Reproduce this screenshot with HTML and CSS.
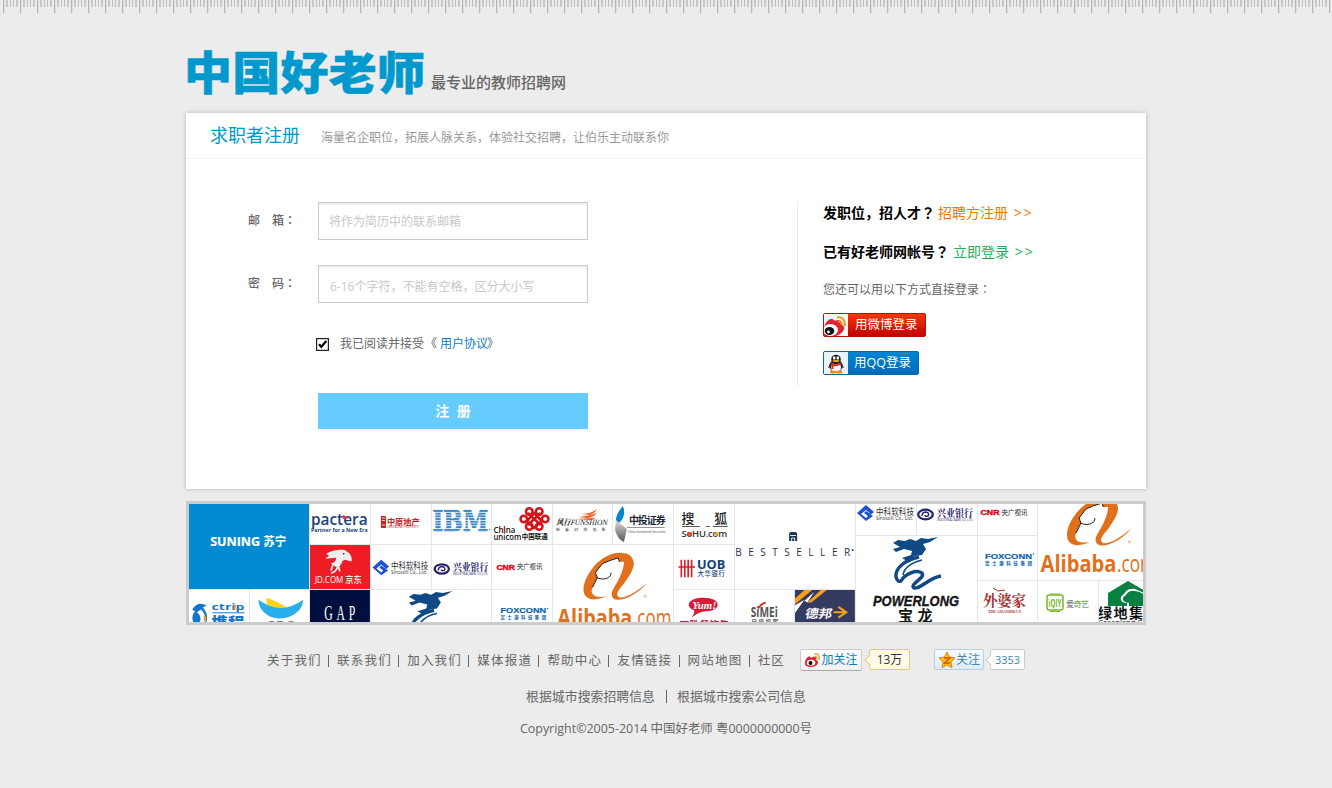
FILE: index.html
```html
<!DOCTYPE html>
<html lang="zh-CN">
<head>
<meta charset="utf-8">
<title>中国好老师 - 求职者注册</title>
<link rel="stylesheet" href="styles.css">
</head>
<body>
<div class="ruler"></div>
<div class="page">
  <header class="header">
    <svg class="logo" width="238" height="54" viewBox="0 0 238 54"><text x="-2" y="46" transform="scale(1 .94)" textLength="241" lengthAdjust="spacing">中国好老师</text></svg>
    <span class="slogan">最专业的教师招聘网</span>
  </header>

  <main class="card">
    <div class="card-head">
      <h1>求职者注册</h1>
      <p>海量名企职位，拓展人脉关系，体验社交招聘，让伯乐主动联系你</p>
    </div>
    <div class="card-body">
      <form class="form">
        <div class="field"><label for="mail">邮　箱<span class="mark">：</span></label><input id="mail" type="text" placeholder="将作为简历中的联系邮箱"></div>
        <div class="field"><label for="pwd">密　码<span class="mark">：</span></label><input id="pwd" class="pwd" type="text" placeholder="6-16个字符，不能有空格，区分大小写"></div>
        <div class="agree">
          <svg width="13" height="13" viewBox="0 0 13 13"><rect x=".6" y=".6" width="11.8" height="11.8" fill="#fff" stroke="#222" stroke-width="1.2"/><path d="M3 6.2L5.3 8.8L10.3 3" fill="none" stroke="#000" stroke-width="2.2"/></svg>
          <span>我已阅读并接受<i>《</i><a>用户协议</a><i class="close">》</i></span>
        </div>
        <button class="submit" type="button">注&nbsp; 册</button>
      </form>
      <aside class="side">
        <p class="line"><b>发职位，招人才<span class="mark">？</span></b><a class="orange">招聘方注册 <span class="more">&gt;&gt;</span></a></p>
        <p class="line second"><b>已有好老师网帐号<span class="mark">？</span></b><a class="green">立即登录 <span class="more">&gt;&gt;</span></a></p>
        <p class="hint">您还可以用以下方式直接登录<span class="mark">：</span></p>
        <a class="login weibo">
          <svg width="24" height="22" viewBox="0 0 24 22"><path d="M0 13C3 5 8 3 11 7C16 4 19 8 18 11C23 13 19 20 12 22H0Z" fill="#df2430"/><ellipse cx="6.500" cy="16" rx="7.500" ry="6" fill="#fff"/><ellipse cx="5.500" cy="17" rx="4.800" ry="4" fill="#111"/><circle cx="4.500" cy="18" r="1.400" fill="#fff"/><path d="M13 3.500Q21 2 21 12M14 7.500Q18 7 17.500 11" fill="none" stroke="#f29a1f" stroke-width="2"/></svg>
          <span>用微博登录</span>
        </a>
        <a class="login qq">
          <svg width="24" height="22" viewBox="0 0 24 22"><path d="M7 10L4 16L7 15Z M17 10L20 16L17 15Z" fill="#222"/><ellipse cx="12" cy="14" rx="6.500" ry="6.500" fill="#222"/><ellipse cx="12" cy="15.500" rx="5" ry="5" fill="#fff"/><ellipse cx="12" cy="7.500" rx="4.800" ry="4.800" fill="#222"/><ellipse cx="10.200" cy="6" rx="1.300" ry="1.800" fill="#fff"/><ellipse cx="13.800" cy="6" rx="1.300" ry="1.800" fill="#fff"/><ellipse cx="12" cy="9" rx="3.400" ry="1" fill="#f5a623"/><path d="M6.500 10.500Q12 14 17.500 10.500V12.500Q12 15 9.500 14V17H7.500V13Z" fill="#e02a1f"/><ellipse cx="9" cy="20" rx="3.200" ry="1.500" fill="#f08a1c"/><ellipse cx="15" cy="20" rx="3.200" ry="1.500" fill="#f08a1c"/></svg>
          <span>用QQ登录</span>
        </a>
      </aside>
    </div>
  </main>

  <svg class="defs" width="0" height="0">
    <defs>
      <pattern id="stripes" width="60" height="2.700" patternUnits="userSpaceOnUse" y="510"><rect width="60" height="1.900" fill="#3a87c8"/></pattern>
      <linearGradient id="silver" x2="0" y2="1"><stop stop-color="#ddd"/><stop offset="1" stop-color="#555"/></linearGradient>
      <g id="sinosoft">
        <path d="M372 567L381 559L389 566L386 568.500L381 564L376 568L381 572L383 570L379 567L381 565L388 570L381 575Z" fill="#1e50d8"/>
        <text x="391" y="568.500" font-size="9" textLength="38" lengthAdjust="spacingAndGlyphs" fill="#333">中科软科技</text>
        <text x="391" y="573.500" font-size="5" textLength="37" lengthAdjust="spacingAndGlyphs" fill="#333">Sinosoft Co., Ltd.</text>
      </g>
      <g id="cib">
        <ellipse cx="440.500" cy="568.500" rx="7.300" ry="4.800" fill="none" stroke="#27246b" stroke-width="2.300"/>
        <path d="M437 570Q437 566 441 566Q445 567 443 570Q440 571 440 569" fill="none" stroke="#27246b" stroke-width="1.500"/>
        <text class="serif" x="452" y="571" font-size="10.500" font-weight="700" textLength="36" lengthAdjust="spacingAndGlyphs" fill="#27246b">兴业银行</text>
        <text x="452" y="574.500" font-size="3.600" textLength="36" lengthAdjust="spacingAndGlyphs" fill="#27246b">INDUSTRIAL BANK CO.,LTD.</text>
      </g>
      <g id="cnr">
        <text class="arial" x="496" y="569.300" font-size="7.500" font-weight="700" textLength="19" lengthAdjust="spacingAndGlyphs" fill="#e2001a" stroke="#e2001a" stroke-width=".4">CNR</text>
        <text x="517" y="569" font-size="6.500" textLength="26" lengthAdjust="spacingAndGlyphs" fill="#222">央广视讯</text>
      </g>
      <g id="foxconn">
        <text class="arial" x="500" y="612.500" font-size="8" font-weight="700" textLength="47" lengthAdjust="spacingAndGlyphs" fill="#0a62b0" stroke="#0a62b0" stroke-width=".2">FOXCONN</text><circle cx="548.500" cy="608" r=".7" fill="#0a62b0"/>
        <text x="500" y="618.500" font-size="4.500" font-weight="700" textLength="47" fill="#0a62b0">富士康科技集团</text>
      </g>
      <g id="alibaba">
        <path d="M622 552C610 551 598 559 591 569C585 577 581 587 584 594C588 602 599 599 606 596C596 598 589 595 592 587L597 577L595 572L602 563L609 560L618 557.500L619 561L624 561C624 569 619 579 614 587C610 593 611 599 617 599.500C626 600 640 592 647 582.500C640 589 626 599 619 597C614 594 620 588 624 583C631 573 634 568 634 562C633 555 628 552 622 552Z" fill="#e2701b"/>
        <path d="M592 587L597 577L595 572L602 563L609 560L618 557L619.500 561M596 577Q604 580 608 577Q611 576 611 572" fill="none" stroke="#222" stroke-width="1"/>
        <circle cx="645.500" cy="596" r="1" fill="none" stroke="#e2701b" stroke-width=".5"/>
        <text x="556.500" y="626" font-size="24" font-weight="700" textLength="76" lengthAdjust="spacingAndGlyphs" fill="#e2701b">Alibaba</text>
        <text x="633" y="626" font-size="24" textLength="39" lengthAdjust="spacingAndGlyphs" fill="#e2701b">.com</text>
      </g>
      <g id="powerlong">
        <path d="M408 596L413 593L420 594L425 592L431 594L436 591L443 592L453 590L445 595L438 597L441 602L437 608L430 609L422 614L417 611L426 608L427 604L419 602L411 605L408 602L415 600Z" fill="#104a86"/>
        <path d="M434 610C420 613 410 621 411 630C412 634 414 635 416 634C420 627 431 622 437 626C441 631 424 637 429 641C435 643 443 631 456 629" fill="none" stroke="#104a86" stroke-width="3.400"/>
        <path d="M437 613C425 616 419 622 418 628" fill="none" stroke="#104a86" stroke-width="1.600"/>
      </g>
    </defs>
  </svg>

  <section class="wall">
    <div class="tiles left">
      <svg class="big" viewBox="189 504 120 85"><rect x="188" y="504" width="122" height="86" fill="#008ad2"/><text x="210" y="545.500" font-size="13" font-weight="700" textLength="50" lengthAdjust="spacingAndGlyphs" fill="#fff" stroke="#fff" stroke-width=".2">SUNING</text><text x="263" y="545.500" font-size="12" font-weight="700" textLength="23" lengthAdjust="spacingAndGlyphs" fill="#fff">苏宁</text></svg>
      <svg viewBox="310 504 60 40"><text x="311" y="525.500" font-size="16" font-weight="600" textLength="57" lengthAdjust="spacingAndGlyphs" fill="#1b4379">pactera</text><path d="M343 515L350 518L343 519Z" fill="#e0304a"/><text x="311" y="532.500" font-size="5.500" font-weight="700" textLength="57" lengthAdjust="spacingAndGlyphs" fill="#1b4379">Partner for a New Era</text></svg>
      <svg viewBox="371 504 60 40"><rect x="381" y="516" width="5" height="12" fill="#c5221f"/><path d="M382 518h3M382 520.500h3M382 525h3" stroke="#fff" stroke-width=".8"/><text x="387" y="525" font-size="8.500" font-weight="700" textLength="33" lengthAdjust="spacingAndGlyphs" fill="#c5221f">中原地产</text><text x="387" y="528.300" font-size="3.300" textLength="32" lengthAdjust="spacingAndGlyphs" fill="#c5221f">CENTALINE PROPERTY</text></svg>
      <svg viewBox="431 504 60 40"><text class="slab" x="431.500" y="531" font-size="28" font-weight="700" textLength="56" lengthAdjust="spacingAndGlyphs" fill="url(#stripes)" stroke="url(#stripes)" stroke-width=".8">IBM</text><circle cx="489" cy="529.500" r=".8" fill="#3a87c8"/></svg>
      <svg viewBox="492 504 60 40"><g fill="none" stroke="#d7141a" stroke-width="2.600"><circle cx="529.500" cy="511.500" r="3.300"/><circle cx="539.500" cy="511.500" r="3.300"/><circle cx="524" cy="519" r="3.300"/><circle cx="545.500" cy="519" r="3.300"/><circle cx="529.500" cy="526.500" r="3.300"/><circle cx="539.500" cy="526.500" r="3.300"/><path d="M527 521L534.500 513L542 521L534.500 528ZM528 513L541 525M541 513L528 525"/></g><text x="493.500" y="533.500" font-size="9.500" font-weight="600" textLength="22" lengthAdjust="spacingAndGlyphs" fill="#111">China</text><path d="M504.500 526v7" stroke="#d7141a" stroke-width="1.200"/><text x="493.500" y="540" font-size="9" font-weight="600" textLength="28" lengthAdjust="spacingAndGlyphs" fill="#111">unicom</text><text x="522" y="539.500" font-size="7" font-weight="700" textLength="26" lengthAdjust="spacingAndGlyphs" fill="#111">中国联通</text></svg>
      <svg viewBox="553 504 60 40"><path d="M581 514Q592 514 597 509Q596 513 590 515ZM579 517Q590 516 597 513Q594 517 588 518ZM577 519Q588 518 596 518L592 520Z" fill="#f05a22"/><g transform="skewX(-15)"><text class="serif" x="697" y="525" font-size="8" font-weight="700" textLength="14" lengthAdjust="spacingAndGlyphs" fill="#111">风行</text><text class="serif" x="711" y="525" font-size="8" textLength="37" lengthAdjust="spacingAndGlyphs" fill="#222">FUNSHION</text></g><text x="556" y="531" font-size="4" textLength="50" fill="#333">新看好的电影</text></svg>
      <svg viewBox="614 504 60 40"><path d="M624 506Q627 514 623 520L618 525Q614 517 624 506Z" fill="#0686cc"/><path d="M617 520L628 529L625 542Q619 540 616 530Z" fill="url(#silver)"/><text x="630" y="524.500" font-size="10" font-weight="600" textLength="37" fill="#1d2638">中投证券</text><path d="M628 527.500H666" stroke="#777" stroke-width=".8"/><text x="629" y="533" font-size="4" textLength="38" lengthAdjust="spacingAndGlyphs" fill="#444">China Investment Securities</text></svg>
      <svg viewBox="674 504 60 40"><text x="681.500" y="523" font-size="13" font-weight="500" fill="#222">搜</text><text x="714.500" y="523" font-size="13" font-weight="500" fill="#222">狐</text><path d="M682 526.500H700M706 526.500H710M713 526.500H728" stroke="#555"/><text x="681.500" y="537" font-size="9.500" font-weight="600" textLength="46" fill="#333">SoHU.com</text><circle cx="690" cy="534" r="2.200" fill="#e8521e"/><circle cx="717" cy="534" r="1.900" fill="#e9a51e"/></svg>
      <svg class="big" viewBox="735 504 120 85"><path d="M789 534Q789 532 791 532H795Q797 532 797 534V541H789Z" fill="#1c3553"/><path d="M790 535.500H796M791.500 541V538H794.500V541" stroke="#fff" stroke-width=".9" fill="none"/><text x="735" y="556" font-size="10" textLength="115" fill="#1c3553">BESTSELLER</text><circle cx="852.500" cy="550" r=".9" fill="#1c3553"/></svg>

      <svg viewBox="310 544 60 45"><rect x="309" y="544" width="62" height="46" fill="#ee1c25"/><path d="M326 553Q334 548 345 549Q354 554 352 561L345 559Q339 562 337 567L331 563Q337 561 336 557L325 558L329 555Z" fill="#eee"/><path d="M333 564L331 570M338 563L340 571M342 561L335 571L331 573" stroke="#fff" stroke-width="1.700" fill="none"/><circle cx="344" cy="553" r=".8"/><text x="314.500" y="583" font-size="9.500" textLength="29" lengthAdjust="spacingAndGlyphs" fill="#fff">JD.COM</text><text x="345.500" y="582.500" font-size="9" font-weight="500" textLength="17" lengthAdjust="spacingAndGlyphs" fill="#fff">京东</text></svg>
      <svg viewBox="371 544 60 45"><use href="#sinosoft"/></svg>
      <svg viewBox="431 544 60 45"><use href="#cib"/></svg>
      <svg viewBox="492 544 60 45"><use href="#cnr"/></svg>
      <svg class="big" viewBox="553 544 120 78"><use href="#alibaba"/></svg>
      <svg viewBox="674 544 60 45"><path d="M681 559V577M684.500 559V577M688 559V577M691.500 559V577M678 566.500H695" stroke="#d8202a" stroke-width="1.700"/><text x="697" y="568.500" font-size="13.500" font-weight="700" textLength="29" lengthAdjust="spacingAndGlyphs" fill="#10407c">UOB</text><text x="697.500" y="576" font-size="6.500" font-weight="500" textLength="28" fill="#10407c">大华银行</text></svg>

      <svg viewBox="189 589 59 33"><path d="M191 609Q197 600 206 605L202 607Q209 615 205 624H193Q189 616 194 611Z" fill="#1675cc"/><path d="M196 612Q202 617 198 624H204Q207 616 200 609Z" fill="#fff"/><path d="M203 615L206 617L203 623Z" fill="#f39a1f"/><text x="211" y="609.500" font-size="9" font-weight="700" textLength="34" lengthAdjust="spacingAndGlyphs" fill="#1675cc">ctrip</text><path d="M235 604V609" stroke="#f39a1f" stroke-width="2"/><path d="M212 612.500H245" stroke="#1675cc"/><text x="211" y="629" font-size="17" font-weight="900" fill="#1675cc">携程</text></svg>
      <svg viewBox="249 589 60 33"><path d="M265 597Q275 600 288 608L280 613Q264 609 265 597Z" fill="#ffd119"/><path d="M257 599Q280 616 303 599Q303 608 294 614Q278 623 265 614Q257 608 257 599Z" fill="#28aeea"/><text x="265" y="631" font-size="14" font-weight="700" textLength="29" fill="#777">CBC</text></svg>
      <svg viewBox="310 589 60 33"><rect x="309" y="589" width="62" height="34" fill="#000f3d"/><text class="serif" x="0" y="0" transform="translate(324 620) scale(.55 1)" font-size="22" textLength="58" fill="#fff">GAP</text></svg>
      <svg class="wide" viewBox="371 589 120 33"><use href="#powerlong"/></svg>
      <svg viewBox="492 589 60 33"><use href="#foxconn"/></svg>
      <svg viewBox="674 589 60 33"><path d="M703 597C724 597 722 611 706 611Q699 611 691 618Q695 613 694 610C684 606 688 597 703 597Z" fill="#dc1835"/><text class="serif" x="692" y="609" font-size="11" font-weight="700" font-style="italic" textLength="25" lengthAdjust="spacingAndGlyphs" fill="#fff">Yum!</text><text x="679" y="629" font-size="10" font-weight="700" textLength="51" fill="#b4233a">百胜餐饮集</text></svg>
      <svg viewBox="735 589 60 33"><text x="750.500" y="617" font-size="14" font-weight="700" textLength="28" lengthAdjust="spacingAndGlyphs" fill="#555">SiMEi</text><path d="M758 608Q761 603 766 602" stroke="#e02b20" stroke-width="2" fill="none"/><text x="751" y="624" font-size="6" font-weight="700" textLength="28" fill="#666">日盛机客</text></svg>
      <svg viewBox="795 589 60 33"><rect x="794" y="589" width="62" height="34" fill="#353a60"/><path d="M794 598L804 589H812L794 604ZM807 602L821 589H827L811 602Z" fill="#f6a11a"/><path d="M794 605L804 599L794 613ZM804 600L814 591L807 602Z" fill="#fff"/><g transform="skewX(-10)"><text x="913" y="618" font-size="12.500" font-weight="700" textLength="28" lengthAdjust="spacingAndGlyphs" fill="#fff">德邦</text></g><path d="M834 612H845M839 606.500L847 612L839 617.500" fill="none" stroke="#f6a11a" stroke-width="2.200"/></svg>
    </div>
    <div class="tiles right">
      <svg viewBox="856 504 60 31"><use href="#sinosoft" x="485" y="-54"/></svg>
      <svg viewBox="917 504 60 31"><use href="#cib" x="485" y="-54"/></svg>
      <svg viewBox="978 504 59 31"><use href="#cnr" x="484.500" y="-54"/></svg>
      <svg class="big" viewBox="1038 504 105 76"><use href="#alibaba" x="484" y="-54"/></svg>
      <svg class="big" viewBox="856 536 121 86"><use href="#powerlong" x="485" y="-53"/><text class="arial" x="873" y="605.500" font-size="15.500" font-weight="700" font-style="italic" textLength="86" lengthAdjust="spacingAndGlyphs" fill="#151515" stroke="#151515" stroke-width=".4">POWERLONG</text><text x="898" y="621" font-size="15" font-weight="700" fill="#151515">宝</text><text x="917.500" y="621" font-size="15" font-weight="700" fill="#151515">龙</text></svg>
      <svg viewBox="978 536 59 44"><use href="#foxconn" x="485" y="-54"/></svg>
      <svg viewBox="978 581 59 41"><text class="serif" x="983" y="606" font-size="14.500" font-weight="700" textLength="43" fill="#a8322f">外婆家</text><path d="M993 588L998 591L1005 590" fill="none" stroke="#a8322f"/><text class="serif" x="988" y="613" font-size="4" font-weight="700" textLength="33" lengthAdjust="spacingAndGlyphs" fill="#a8322f">THE GRANDMA'S</text></svg>
      <svg viewBox="1038 581 60 41"><rect x="1047" y="595" width="16" height="15" rx="2" fill="none" stroke="#76b82a" stroke-width="1.500"/><path d="M1050 594H1060M1050 611.500H1060" stroke="#76b82a"/><text x="1048.500" y="607" font-size="10" font-weight="700" textLength="13" lengthAdjust="spacingAndGlyphs" fill="#76b82a">iQIY</text><text x="1066" y="607" font-size="8" font-weight="500" fill="#777" textLength="23">爱<tspan fill="#76b82a">奇艺</tspan></text></svg>
      <svg viewBox="1099 581 44 41"><path d="M1108 593L1128 581L1145 591V593.500L1135 589Q1127 588 1124 594Q1120 596 1121 600Q1122 603 1127 603V606H1108Z" fill="#078040"/><path d="M1129 606V603Q1122 602 1123 598Q1124 596 1126 595Q1129 590 1135 591Q1142 592 1145 596V606Z" fill="#078040"/><text x="1098" y="618" font-size="14" font-weight="700" textLength="45" fill="#111">绿地集</text><text x="1098" y="625" font-size="7.500" textLength="45" lengthAdjust="spacingAndGlyphs" fill="#222">Greenland G</text></svg>
    </div>
  </section>
</div>

<footer class="footer">
  <div class="row first">
    <nav class="links"><a>关于我们</a><a>联系我们</a><a>加入我们</a><a>媒体报道</a><a>帮助中心</a><a>友情链接</a><a>网站地图</a><a>社区</a></nav>
    <a class="follow wb"><svg width="17" height="16" viewBox="0 0 17 16"><path d="M1 10C2 5 6 3 7 6C11 3 13 6 12 8C16 9 14 15 7 15C3 15 0 13 1 10Z" fill="#df2430"/><ellipse cx="7" cy="10.700" rx="4.300" ry="2.900" fill="#fff"/><circle cx="6.500" cy="10.900" r="2" fill="#111"/><path d="M10 2Q16 1 15 8M10.500 4.500Q13 4 13 7" fill="none" stroke="#f29a1f" stroke-width="1.200"/></svg><span>加关注</span></a>
    <span class="count yellow">13万</span>
    <a class="follow qz"><svg width="18" height="18" viewBox="0 0 18 18"><path d="M9 1L11.500 6L17 7L13 11L14 16.500L9 14L4 16.500L5 11L1 7L6.500 6Z" fill="#fdbf14" stroke="#e8820e"/><path d="M6 7H12L6.500 12H12" fill="none" stroke="#d84c0c" stroke-width="1.300"/></svg><span>关注</span></a>
    <span class="count white">3353</span>
  </div>
  <div class="row city"><a>根据城市搜索招聘信息</a><i></i><a>根据城市搜索公司信息</a></div>
  <div class="row copy">Copyright©2005-2014 中国好老师 粤0000000000号</div>
</footer>
</body>
</html>
```
FILE: styles.css
```css
* { box-sizing: border-box; }
body {
  margin: 0;
  height: 788px;
  overflow: hidden;
  background: #ececec;
  color: #666;
  font: 12px/18px "Open Sans", "Noto Sans CJK SC", sans-serif;
}
h1, p { margin: 0; }
i { font-style: normal; }
.mark { font-family: "Noto Sans CJK JP", sans-serif; font-feature-settings: "locl" 0; line-height: 1; }

.ruler {
  height: 13px;
  margin-left: 3px;
  background:
    linear-gradient(90deg, #b4b4b4 1px, #ddd 1px, #ddd 2px, transparent 2px) 0 0 / 17px 13px repeat-x,
    linear-gradient(90deg, transparent 3px, #c8c8c8 3px, #c8c8c8 5px, transparent 5px, transparent 7px, #bebebe 7px, #bebebe 8px, transparent 8px, transparent 10px, #bebebe 10px, #bebebe 11px, transparent 11px, transparent 13px, #c8c8c8 13px, #c8c8c8 15px, transparent 15px) 0 0 / 17px 7px repeat-x;
}

.page { width: 960px; margin: 0 auto; }
.header { display: flex; height: 100px; padding-top: 34px; }
.logo { flex: none; overflow: visible; }
.logo text { font-size: 48px; font-weight: 900; fill: #0099ce; stroke: #0099ce; stroke-width: .6px; }
.slogan { margin: 25px 0 0 7px; font-size: 15px; font-weight: 500; line-height: 20px; color: #666; }

.card { height: 376px; background: #fff; box-shadow: 0 0 4px rgba(0, 0, 0, .25); }
.card-head { display: flex; height: 46px; padding-left: 24px; border-bottom: 1px solid #f2f2f2; }
.card-head h1 { width: 111px; font-size: 18px; font-weight: 400; line-height: 44px; color: #0099ce; }
.card-head p { line-height: 50px; color: #999; }
.card-body { display: flex; padding-top: 43px; }

.form { width: 611px; padding-left: 62px; }
.field { display: flex; height: 38px; margin-bottom: 25px; }
.field label { width: 70px; line-height: 38px; font-weight: 500; }
.field input {
  width: 270px;
  height: 38px;
  padding: 0 10px;
  border: 1px solid #ccc;
  outline: 0;
  background: #fff;
  box-shadow: inset 0 2px 2px #eee;
  font: inherit;
}
.field .pwd { padding: 5px 11px 0; }
.field input::placeholder { color: #c8c8c8; opacity: 1; }
.agree { display: flex; align-items: center; gap: 11px; height: 18px; margin: 32px 0 40px 68px; }
.agree i { display: inline-block; width: 16px; text-indent: 1px; }
.agree i.close { text-indent: -1px; }
.agree a { color: #0a80c8; }
.submit { display: block; width: 270px; height: 36px; margin-left: 70px; padding: 0; border: 0; background: #66ccff; color: #fff; font: 700 14px/36px "Open Sans", "Noto Sans CJK SC", sans-serif; }

.side { width: 320px; height: 184px; padding-left: 25px; border-left: 1px solid #e8e8e8; }
.line { display: flex; font-size: 14px; line-height: 22px; height: 39px; }
.line b { width: 115px; color: #000; white-space: nowrap; }
.line.second b { width: 130px; }
.more { margin-left: 2px; letter-spacing: 2px; }
.orange { color: #ff7300; }
.green { color: #1fae5b; }
.hint { height: 33px; line-height: 20px; }
.login { display: flex; width: 103px; height: 24px; margin-bottom: 14px; border: 1px solid #b31500; border-radius: 2px; background: linear-gradient(#ee3a08, #c60000); color: #fff; line-height: 22px; }
.login svg { flex: none; background: #f6f8fa; }
.login span { padding-left: 7px; font-size: 12.5px; white-space: nowrap; }
.login.qq { width: 96px; border-color: #0568aa; background: linear-gradient(#0086d4, #006bb8); }
.login.qq svg { background: #e9f3fa; }
.login.qq span { padding-left: 6px; }

.defs { position: absolute; }
.wall { display: flex; height: 124px; margin-top: 12px; padding: 3px; background: #ccc; }
.tiles { display: grid; gap: 1px; background: #e4e6ea; overflow: hidden; }
.tiles svg { width: 100%; height: 100%; background: #fff; }
.left { width: 666px; grid-template-columns: repeat(11, minmax(0, 1fr)); grid-template-rows: 40px 44px 32px; }
.right { width: 288px; grid-template-columns: 60px 60px 59px 60px 44px; grid-template-rows: 31px 44px 41px; padding-left: 1px; }
.big { grid-column: span 2; grid-row: span 2; }
.wide { grid-column: span 2; }
.arial { font-family: "Liberation Sans", sans-serif; }
.serif { font-family: "Liberation Serif", "Noto Serif CJK SC", "Noto Sans CJK SC", serif; }
.slab { font-family: "DejaVu Serif", serif; }

.footer { padding-top: 23px; }
.row { display: flex; justify-content: center; line-height: 20px; }
.first { height: 38px; justify-content: flex-start; padding-left: 267px; }
.links { display: flex; width: 533px; padding-top: 3px; font-size: 12.5px; letter-spacing: 1.2px; white-space: nowrap; }
.links a { position: relative; width: 70.1px; flex: none; }
.links a + a::before { content: ""; position: absolute; left: -9px; top: 4px; width: 1px; height: 12px; background: #666; }
.follow { display: flex; align-items: center; justify-content: center; border: 1px solid #ccc; border-bottom-color: #aaa; border-radius: 2px; color: #0a80b8; white-space: nowrap; }
.wb { width: 62px; height: 22px; margin-top: 1px; background: linear-gradient(#fff, #f1f1f1); }
.qz { width: 50px; height: 21px; margin: 1px 0 0 24px; border-color: #b8cfe0; background: linear-gradient(#f7fbfe, #dcebf6); color: #4a86b4; }
.count { position: relative; height: 21px; margin: 1px 0 0 7px; border: 1px solid #e8c878; border-radius: 2px; background: #fffbe8; line-height: 20px; text-align: center; color: #333; }
.count::before { content: ""; position: absolute; left: -4px; top: 6px; width: 7px; height: 7px; border: solid #e8c878; border-width: 0 0 1px 1px; background: inherit; transform: rotate(45deg); }
.yellow { width: 41px; }
.white { width: 35px; margin-left: 6px; background: #fff; border-color: #ccc; color: #3e84b5; font-size: 11px; }
.white::before { border-color: #ccc; }
.city { height: 32px; font-size: 12.9px; }
.city i { width: 1px; height: 13px; margin: 4px 10px 0 11px; background: #666; }
.copy { padding-top: 1px; font-size: 12.45px; }
```
